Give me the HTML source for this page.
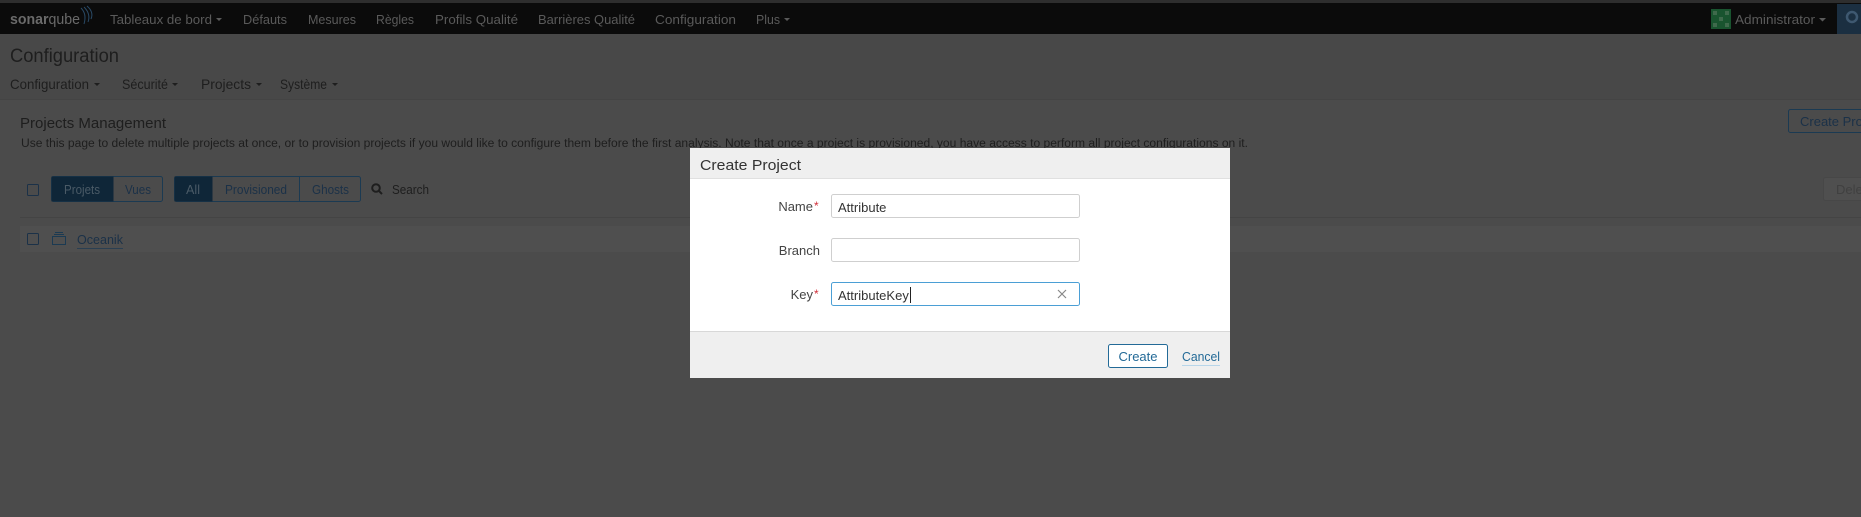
<!DOCTYPE html>
<html><head><meta charset="utf-8"><style>
html,body{margin:0;padding:0;width:1861px;height:517px;overflow:hidden;background:#4a4a4a}
svg{display:block}
text{font-family:"Liberation Sans",sans-serif}
</style></head><body>
<svg width="1861" height="517" viewBox="0 0 1861 517" xmlns="http://www.w3.org/2000/svg">
<rect width="1861" height="517" fill="#4b4b4b"/>
<rect y="34" width="1861" height="65" fill="#484848"/>
<rect y="99" width="1861" height="1" fill="#444"/>
<rect width="1861" height="3" fill="#2e2e2e"/>
<rect y="3" width="1861" height="31" fill="#0b0b0b"/>
<text x="10" y="24" font-size="15" fill="#6a6a6a" textLength="70" lengthAdjust="spacingAndGlyphs"><tspan font-weight="bold">sonar</tspan>qube</text>
<path d="M81 8 Q87 14 84 24 M84 7 Q91 14 88 22 M87 6 Q94 12 91 19" stroke="#2a4a66" stroke-width="1" fill="none"/>
<g font-size="13" fill="#5a5a5a">
<text x="110" y="24" textLength="102" lengthAdjust="spacingAndGlyphs">Tableaux de bord</text>
<text x="243" y="24" textLength="44" lengthAdjust="spacingAndGlyphs">Défauts</text>
<text x="308" y="24" textLength="48" lengthAdjust="spacingAndGlyphs">Mesures</text>
<text x="376" y="24" textLength="38" lengthAdjust="spacingAndGlyphs">Règles</text>
<text x="435" y="24" textLength="83" lengthAdjust="spacingAndGlyphs">Profils Qualité</text>
<text x="538" y="24" textLength="97" lengthAdjust="spacingAndGlyphs">Barrières Qualité</text>
<text x="655" y="24" textLength="81" lengthAdjust="spacingAndGlyphs">Configuration</text>
<text x="756" y="24" textLength="24" lengthAdjust="spacingAndGlyphs">Plus</text>
<text x="1735" y="24" textLength="80" lengthAdjust="spacingAndGlyphs">Administrator</text>
</g>
<path d="M216 18h6l-3 3z M784 18h6l-3 3z M1819 18h7l-3.5 3.5z" fill="#5a5a5a"/>
<rect x="1711" y="9" width="20" height="20" fill="#19542f"/>
<path d="M1713 11h4v4h-4zM1725 11h4v4h-4zM1719 17h4v4h-4zM1713 23h4v4h-4zM1725 23h4v4h-4z" fill="#3f6a4c"/>
<rect x="1837" y="4" width="24" height="30" fill="#1b2f41"/>
<circle cx="1852" cy="17" r="5" stroke="#3e5870" stroke-width="2.5" fill="none"/>
<text x="10" y="62" font-size="19" fill="#1e1e1e" textLength="109" lengthAdjust="spacingAndGlyphs">Configuration</text>
<g font-size="14" fill="#1e1e1e">
<text x="10" y="89" textLength="79" lengthAdjust="spacingAndGlyphs">Configuration</text>
<text x="122" y="89" textLength="46" lengthAdjust="spacingAndGlyphs">Sécurité</text>
<text x="201" y="89" textLength="50" lengthAdjust="spacingAndGlyphs">Projects</text>
<text x="280" y="89" textLength="47" lengthAdjust="spacingAndGlyphs">Système</text>
</g>
<path d="M94 83h6l-3 3z M172 83h6l-3 3z M256 83h6l-3 3z M332 83h6l-3 3z" fill="#1e1e1e"/>
<text x="20" y="128" font-size="15" fill="#1e1e1e" textLength="146" lengthAdjust="spacingAndGlyphs">Projects Management</text>
<text x="21" y="147" font-size="11.5" fill="#1e1e1e" textLength="1227" lengthAdjust="spacingAndGlyphs">Use this page to delete multiple projects at once, or to provision projects if you would like to configure them before the first analysis. Note that once a project is provisioned, you have access to perform all project configurations on it.</text>
<rect x="1788.5" y="109.5" width="80" height="23" rx="2" fill="none" stroke="#1b3a52"/>
<text x="1800" y="126" font-size="13" fill="#1b3148">Create Project</text>
<rect x="1823.5" y="177.5" width="50" height="23" rx="2" fill="#4f4f4f" stroke="#474747"/>
<text x="1836" y="194" font-size="13" fill="#404040">Delete</text>
<rect x="27.5" y="184.5" width="11" height="11" rx="1" fill="none" stroke="#1b3148"/>
<rect x="51.5" y="176.5" width="111" height="25" rx="2" fill="none" stroke="#1b3a52"/>
<rect x="51.5" y="176.5" width="62" height="25" fill="#0f2638"/>
<rect x="174.5" y="176.5" width="186" height="25" rx="2" fill="none" stroke="#1b3a52"/>
<rect x="174.5" y="176.5" width="38" height="25" fill="#0f2638"/>
<line x1="299.5" y1="177" x2="299.5" y2="201" stroke="#1b3a52"/>
<g font-size="12.5">
<text x="64" y="194" fill="#4a5a66" textLength="36" lengthAdjust="spacingAndGlyphs">Projets</text>
<text x="125" y="194" fill="#1b3148" textLength="26" lengthAdjust="spacingAndGlyphs">Vues</text>
<text x="186" y="194" fill="#4a5a66" textLength="14" lengthAdjust="spacingAndGlyphs">All</text>
<text x="225" y="194" fill="#1b3148" textLength="62" lengthAdjust="spacingAndGlyphs">Provisioned</text>
<text x="312" y="194" fill="#1b3148" textLength="37" lengthAdjust="spacingAndGlyphs">Ghosts</text>
<text x="392" y="194" fill="#1e1e1e" textLength="37" lengthAdjust="spacingAndGlyphs">Search</text>
</g>
<circle cx="376" cy="188" r="3.8" stroke="#1e1e1e" stroke-width="2" fill="none"/>
<line x1="379" y1="191" x2="382" y2="194" stroke="#1e1e1e" stroke-width="2"/>
<rect x="20" y="217" width="1841" height="1" fill="#444"/>
<rect x="20" y="226" width="1841" height="26" fill="#4f4f4f"/>
<rect x="27.5" y="233.5" width="11" height="11" rx="1" fill="none" stroke="#1b3148"/>
<path d="M52.5 236.5h13v8h-13z M54 234.5h10 M55 232.5h8" stroke="#1b3a52" fill="none"/>
<text x="77" y="244" font-size="13" fill="#1b3148" textLength="46" lengthAdjust="spacingAndGlyphs">Oceanik</text>
<line x1="77" y1="248.5" x2="123" y2="248.5" stroke="#2a3f52"/>
<rect x="690" y="148" width="540" height="230" fill="#fff"/>
<rect x="690" y="148" width="540" height="30" fill="#efefef"/>
<rect x="690" y="178" width="540" height="1" fill="#e0e0e0"/>
<rect x="690" y="331" width="540" height="47" fill="#efefef"/>
<rect x="690" y="331" width="540" height="1" fill="#d8d8d8"/>
<text x="700" y="170" font-size="15" fill="#333" textLength="101" lengthAdjust="spacingAndGlyphs">Create Project</text>
<g font-size="13" fill="#444" text-anchor="end">
<text x="813" y="211">Name</text>
<text x="820" y="255">Branch</text>
<text x="813" y="299">Key</text>
</g>
<text x="814" y="210" font-size="12" fill="#d02f3a">*</text>
<text x="814" y="298" font-size="12" fill="#d02f3a">*</text>
<rect x="831.5" y="194.5" width="248" height="23" rx="2" fill="#fff" stroke="#cfcfcf"/>
<rect x="831.5" y="238.5" width="248" height="23" rx="2" fill="#fff" stroke="#cfcfcf"/>
<rect x="831.5" y="282.5" width="248" height="23" rx="2" fill="#fff" stroke="#4b9fd5"/>
<text x="838" y="212" font-size="13" fill="#333">Attribute</text>
<text x="838" y="300" font-size="13" fill="#333">AttributeKey</text>
<line x1="910.5" y1="287" x2="910.5" y2="303" stroke="#222"/>
<path d="M1058 290l8 8M1066 290l-8 8" stroke="#888" stroke-width="1.2"/>
<rect x="1108.5" y="344.5" width="59" height="23" rx="2" fill="#fff" stroke="#236a97"/>
<text x="1138" y="361" font-size="13" fill="#236a97" text-anchor="middle">Create</text>
<text x="1182" y="361" font-size="13" fill="#236a97" textLength="38" lengthAdjust="spacingAndGlyphs">Cancel</text>
<line x1="1182" y1="365.5" x2="1220" y2="365.5" stroke="#b8d6ea"/>
</svg>
</body></html>
